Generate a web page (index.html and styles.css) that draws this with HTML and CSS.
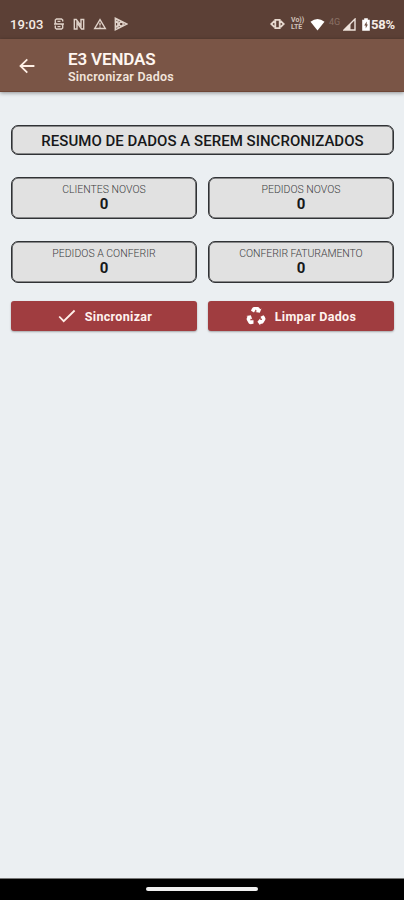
FILE: index.html
```html
<!DOCTYPE html>
<html lang="pt-BR">
<head>
<meta charset="utf-8">
<title>E3 VENDAS</title>
<link rel="stylesheet" href="styles.css">
</head>
<body>
<div class="screen">
  <div class="status">
    <span class="clock">19:03</span>
    <div class="notices">
      <svg width="12" height="14" viewBox="0 0 12 14"><path d="M9.7 4.6V3L8.5 2H3.5L2.3 3v2.8L3.5 7h5l1.2 1.3V11l-1.2 1h-5l-1.2-1V8.4M1 7h10M4.5 4.4h3M4.5 9.6h3"/></svg>
      <svg width="12" height="14" viewBox="0 0 12 14"><path d="M1.3 12V2.5h2L8 8.7V2.5h2.7V12H8.6L4 5.8V12z"/></svg>
      <svg width="14" height="14" viewBox="0 0 14 14"><path d="M7 2.7 12.3 11.5H1.7zM7 5.8v2.8M7 9.4v1.2"/></svg>
      <svg width="14" height="14" viewBox="0 0 14 14"><path d="M1.3 1.2 12.8 7 1.3 12.8zM4 3v8.3M1.5 3.5l5.5 6.3M1.5 10.8 7.2 4"/><circle cx="7.2" cy="7" r="2"/></svg>
    </div>
    <div class="signals">
      <svg class="eye" width="15" height="12" viewBox="0 0 15 12"><path d="M4.5 2.8 1.2 6l3.3 3.2M10.5 2.8 13.8 6l-3.3 3.2M5.3 1.8h4.4v8.4H5.3z"/></svg>
      <span class="volte"><span>Vo))</span><span>LTE</span></span>
      <svg class="wifi" width="15" height="13" viewBox="0 0 15 13"><path d="M.5 3.8Q7.5-1.8 14.5 3.8L7.5 12.6z"/></svg>
      <span class="net">4G</span>
      <svg class="cell" width="13" height="13" viewBox="0 0 13 13"><path d="M12 1v11H1z"/><path class="fill" d="M7.5 5.5V12H1z"/></svg>
      <svg class="battery" width="8" height="13" viewBox="0 0 8 13"><path d="M.2 1.8h2V.3h3.6v1.5h2v10.9H.2z"/><path class="bolt" d="M4.7 3.5 2.2 7.5h1.5v3l2.2-4H4.7z"/></svg>
      <span class="percent">58%</span>
    </div>
  </div>
  <header class="toolbar">
    <svg class="back" width="18" height="18" viewBox="0 0 18 18"><path d="M16.4 9H2.7M9.3 2.3 2.5 9l6.8 6.7"/></svg>
    <div class="heading">
      <h1>E3 VENDAS</h1>
      <p>Sincronizar Dados</p>
    </div>
  </header>
  <main>
    <h2 class="box summary"><span>RESUMO DE DADOS A SEREM SINCRONIZADOS</span></h2>
    <div class="grid">
      <section class="box card"><span class="label">CLIENTES NOVOS</span><strong>0</strong></section>
      <section class="box card"><span class="label">PEDIDOS NOVOS</span><strong>0</strong></section>
      <section class="box card"><span class="label">PEDIDOS A CONFERIR</span><strong>0</strong></section>
      <section class="box card"><span class="label wide">CONFERIR FATURAMENTO</span><strong>0</strong></section>
    </div>
    <div class="actions">
      <button type="button" class="sync"><svg width="18" height="14" viewBox="0 0 18 14"><path d="m1.2 7.5 4.5 4.7L16.6 1.5"/></svg><span>Sincronizar</span></button>
      <button type="button" class="clear">
        <svg width="20" height="20" viewBox="0 0 20 20">
          <g id="arm"><path d="M5.7 3Q6.7 1 8 1h3.7q1.1 0 1.7 1l.8 1.3 1.3-.8-1.7 4.3-4.5-.8 1.5-.8-1-1.6-1.8 3-3-1.8z"/></g>
          <use href="#arm" transform="rotate(120 10 10.6)"/>
          <use href="#arm" transform="rotate(240 10 10.6)"/>
        </svg><span>Limpar Dados</span></button>
    </div>
  </main>
  <footer class="navbar"><span></span></footer>
</div>
</body>
</html>
```
FILE: styles.css
```css
* { box-sizing: border-box; margin: 0; padding: 0; }
body { background: #ebeff2; font-family: Roboto, "Liberation Sans", sans-serif; }
.screen { width: 404px; height: 900px; display: flex; flex-direction: column; overflow: hidden; }
svg { display: block; flex: none; }

.status { height: 39px; flex: none; background: #5c4036; color: #f6ece6; display: flex; align-items: center; padding: 9px 8px 0 10px; }
.clock { width: 43px; font-size: 13px; font-weight: 500; letter-spacing: .1px; }
.notices { display: flex; align-items: center; gap: 8px; }
.notices svg { fill: none; stroke: #dfd1c8; stroke-width: 1.4; }
.notices svg:last-child { margin-left: -1px; }
.signals { margin-left: auto; display: flex; align-items: center; }
.eye { fill: none; stroke: #e6d8ce; stroke-width: 1.8; margin-right: 6px; }
.volte { width: 15px; display: flex; flex-direction: column; font-size: 7px; line-height: 7px; font-weight: 700; color: #d2c3ba; margin-right: 4px; }
.wifi { fill: #fff; margin-right: 4px; }
.net { width: 13px; font-size: 9px; color: #8a7165; margin-top: -5px; margin-right: 1px; }
.cell { fill: none; stroke: #eee3dc; stroke-width: 1.4; margin-right: 6px; }
.cell .fill { fill: #eee3dc; stroke: none; }
.battery { fill: #fff; margin-right: 1px; }
.battery .bolt { fill: #6d5145; }
.percent { width: 25px; font-size: 13px; font-weight: 700; letter-spacing: -.2px; }

.toolbar { height: 53px; flex: none; background: #7a5546; border-bottom: 1px solid #6d4636; color: #fff6f0; display: flex; padding: 0 18px; box-shadow: 0 1px 4px rgba(0, 0, 0, .4); position: relative; }
.back { margin-top: 18px; fill: none; stroke: #fff0e6; stroke-width: 1.8; }
.heading { margin-left: 32px; padding-top: 10px; white-space: nowrap; }
h1 { font-size: 17px; line-height: 20px; font-weight: 600; letter-spacing: -.15px; }
.heading p { font-size: 12.5px; line-height: 15px; font-weight: 600; letter-spacing: .23px; color: #f2e4db; }

main { flex: 1; padding: 33px 10px 0 11px; }
.box { background: #e1e1e1; border: 1px solid #303235; border-radius: 7px; box-shadow: inset 0 0 0 .6px #303235; color: #17181a; }
.summary { height: 30px; display: flex; align-items: center; justify-content: center; padding-top: 1px; font-size: 15px; font-weight: 500; letter-spacing: .03px; white-space: nowrap; }
.grid { display: grid; grid-template-columns: 186px 186px; gap: 22px 11px; margin-top: 22px; }
.card { height: 42px; display: flex; flex-direction: column; align-items: center; padding: 5px 0 0; }
.label { font-size: 10.5px; line-height: 13px; font-weight: 300; color: #3b3c3e; }
.wide { letter-spacing: -.08px; }
.card strong { font-size: 15px; line-height: 17px; font-weight: 700; }
.actions { display: grid; grid-template-columns: 186px 186px; gap: 11px; margin-top: 18px; }
button { height: 30px; border: 0; border-radius: 3px; background: #a03d40; color: #fff2ee; box-shadow: 0 1px 2px rgba(0, 0, 0, .3); display: flex; align-items: center; justify-content: center; gap: 9px; font: 700 12.5px Roboto, "Liberation Sans", sans-serif; letter-spacing: .32px; }
.sync { padding-left: 2px; }
.sync svg { fill: none; stroke: #fff0e9; stroke-width: 1.8; }
.clear svg { fill: #fff; }

.navbar { height: 22px; flex: none; background: #000; border-top: 1px solid #777; display: flex; justify-content: center; padding-top: 8px; }
.navbar span { width: 112px; height: 4px; background: #f0f0f0; border-radius: 2px; }
```
